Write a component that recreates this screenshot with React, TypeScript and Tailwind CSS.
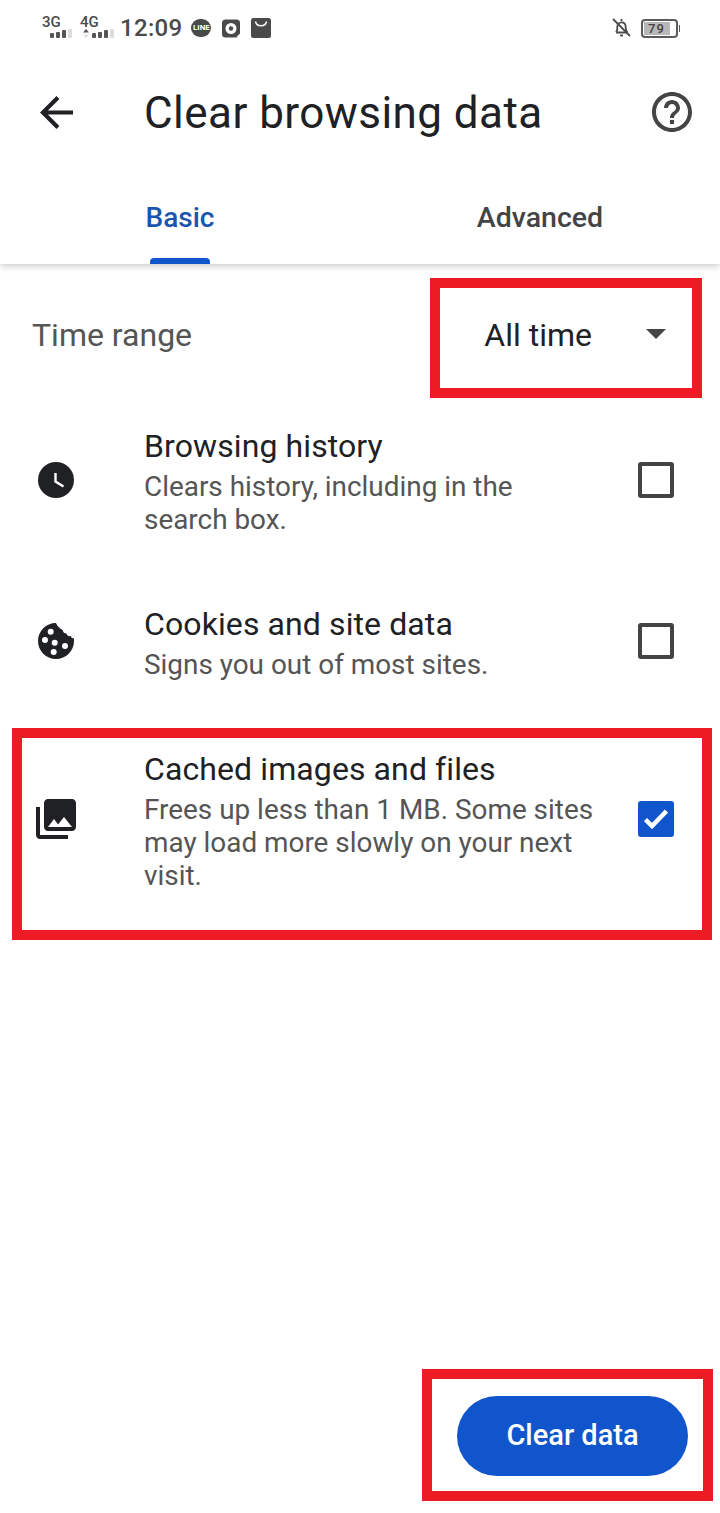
const font = "font-['Roboto',sans-serif]";

const Signal = ({ label, arrows }: { label: string; arrows?: boolean }) => (
  <div className="relative h-[24px] w-[32px]">
    <span className="absolute left-0 top-[-2px] text-[15px] font-medium leading-[16px] text-[#4a4a4a]">{label}</span>
    <div className={`absolute top-[13px] flex items-end gap-[2px] ${arrows ? "left-[3px]" : "left-[8px]"}`}>
      {arrows && (
        <svg width="6" height="9" viewBox="0 0 6 9" className="mr-[1px]">
          <path d="M3 0l3 3.500H0z" fill="#555" />
          <path d="M3 9L0 5.500h6z" fill="#ddd" />
        </svg>
      )}
      <span className="h-[5px] w-[4px] rounded-[1px] bg-[#555]" />
      <span className="h-[6px] w-[4px] rounded-[1px] bg-[#555]" />
      <span className="h-[8px] w-[4px] rounded-[1px] bg-[#555]" />
      <span className="h-[9px] w-[4px] rounded-[1px] bg-[#ddd]" />
    </div>
  </div>
);

const StatusBar = () => (
  <div className="flex h-[50px] items-center pl-[42px] pr-[40px] pt-[6px]">
    <Signal label="3G" />
    <div className="w-[6px]" />
    <Signal label="4G" arrows />
    <span className="ml-[8px] text-[24px] font-medium leading-none tracking-[0.3px] text-[#4a4a4a]">12:09</span>
    <div className="relative ml-[9px] flex h-[18px] w-[20px] items-center justify-center rounded-full bg-[#4a4a4a]">
      <span className="text-[8px] font-bold leading-none text-white">LINE</span>
    </div>
    <svg width="18" height="19" viewBox="0 0 18 19" className="ml-[11px]">
      <rect width="18" height="18" y="0.5" rx="3.5" fill="#4a4a4a" />
      <circle cx="9" cy="9.5" r="5.5" fill="#fff" />
      <circle cx="9" cy="9.5" r="2.2" fill="#4a4a4a" />
      <path d="M14 18.500l4-4v4z" fill="#fff" />
    </svg>
    <svg width="20" height="20" viewBox="0 0 20 20" className="ml-[11px]">
      <rect width="20" height="20" rx="2.5" fill="#4a4a4a" />
      <path d="M4.500 3.500c.6 3 2.600 4.300 5.500 4.300s4.900-1.300 5.500-4.300" stroke="#fff" strokeWidth="1.400" fill="none" />
    </svg>
    <div className="flex-1" />
    <svg width="19" height="20" viewBox="0 0 19 20" fill="none" stroke="#4a4a4a" strokeWidth="1.800">
      <path d="M4 14.500h11.500M4 14.500c1.500-1.500 1.300-3 1.300-5.500 0-2.800 1.700-4.700 4.200-4.700 2.500 0 4.200 1.900 4.200 4.700 0 2.500-.2 4 1.800 5.500" />
      <path d="M1 1l17 17" />
      <path d="M8 17.500h3" />
      <path d="M9.500 1v2" />
    </svg>
    <div className="ml-[10px] flex items-center">
      <div className="relative flex h-[19px] w-[37px] items-center rounded-[4px] border-2 border-[#5a5a5a] p-[1px]">
        <div className="flex h-full w-[26px] items-center justify-center bg-[#b8b8b8]">
          <span className="text-[13px] font-medium leading-none tracking-[1px] text-[#444]">79</span>
        </div>
      </div>
      <div className="ml-[1px] h-[7px] w-[1.500px] bg-[#5a5a5a]" />
    </div>
  </div>
);

const Header = () => (
  <div className="relative z-10 bg-white shadow-[0_2px_7px_rgba(0,0,0,0.22)]">
    <StatusBar />
    <div className="flex h-[124px] items-start pt-[39px]">
      <div className="flex w-[144px] justify-start pl-[40px] pt-[7px]">
        <svg width="33" height="33" viewBox="4 4 16 16" fill="#202124">
          <path d="M20 11H7.830l5.590-5.590L12 4l-8 8 8 8 1.410-1.410L7.830 13H20v-2z" />
        </svg>
      </div>
      <h1 className="flex-1 text-[44px] font-normal leading-[48px] tracking-[0.45px] text-[#202124]">Clear browsing data</h1>
      <div className="pr-[28px] pt-[3px]">
        <svg width="40" height="40" viewBox="2 2 20 20" fill="#444">
          <path d="M11 18h2v-2h-2v2zm1-16C6.480 2 2 6.480 2 12s4.480 10 10 10 10-4.480 10-10S17.520 2 12 2zm0 18c-4.410 0-8-3.590-8-8s3.590-8 8-8 8 3.590 8 8-3.590 8-8 8zm0-14c-2.210 0-4 1.790-4 4h2c0-1.100.9-2 2-2s2 .9 2 2c0 2-3 1.750-3 5h2c0-2.250 3-2.500 3-5 0-2.210-1.790-4-4-4z" />
        </svg>
      </div>
    </div>
    <div className="flex h-[90px]">
      <div className="relative flex flex-1 justify-center pt-[27px]">
        <span className="text-[28px] font-medium leading-[34px] text-[#1a56b0]">Basic</span>
        <div className="absolute bottom-0 left-[150px] h-[6px] w-[60px] rounded-t-[4px] bg-[#1155cc]" />
      </div>
      <div className="flex flex-1 justify-center pt-[27px]">
        <span className="text-[28.500px] font-medium leading-[34px] text-[#444]">Advanced</span>
      </div>
    </div>
  </div>
);

const Checkbox = ({ checked }: { checked?: boolean }) =>
  checked ? (
    <div className="flex h-[36px] w-[36px] items-center justify-center rounded-[3px] bg-[#1155cc]">
      <svg width="24" height="20" viewBox="0 0 24 20" fill="none" stroke="#fff" strokeWidth="4.500">
        <path d="M1.500 10.500l6.500 6.500L22.500 2" />
      </svg>
    </div>
  ) : (
    <div className="h-[36px] w-[36px] rounded-[3px] border-[4px] border-[#444]" />
  );

const ClockIcon = () => (
  <svg width="36" height="36" viewBox="0 0 36 36">
    <circle cx="18" cy="18" r="18" fill="#202124" />
    <path d="M17.500 11v8.500l8 5" fill="none" stroke="#fff" strokeWidth="2.400" />
  </svg>
);

const CookieIcon = () => (
  <svg width="36" height="36" viewBox="0 0 36 36" fill="#202124">
    <path d="M18 0C8 0 0 8 0 18s8 18 18 18 18-8 18-18c0-1-.1-2-.2-3-1.200.5-2.500 0-3-2-2 .5-3.800-.3-4.300-2.500-2 0-3.500-1-3.800-3.500C22.500 6 19 3 18 0z" />
    <g fill="#fff">
      <circle cx="12.700" cy="8.700" r="3" />
      <circle cx="7" cy="17" r="3" />
      <circle cx="16.700" cy="19.700" r="3" />
      <circle cx="27" cy="23" r="3" />
      <circle cx="15.700" cy="29" r="3" />
    </g>
  </svg>
);

const PhotosIcon = () => (
  <svg width="40" height="40" viewBox="2 2 20 20" fill="#202124">
    <path d="M22 16V4c0-1.100-.9-2-2-2H8c-1.100 0-2 .9-2 2v12c0 1.100.9 2 2 2h12c1.100 0 2-.9 2-2zm-11-4l2.030 2.710L16 11l4 5H8l3-4zM2 6v14c0 1.100.9 2 2 2h14v-2H4V6H2z" />
  </svg>
);

const Option = ({ icon, title, lines, checked }: { icon: React.ReactNode; title: string; lines: string[]; checked?: boolean }) => (
  <div className="flex items-center">
    <div className="mb-[3px] flex w-[144px] justify-center pr-[32px]">{icon}</div>
    <div className="flex-1">
      <div className="text-[32px] leading-[40px] tracking-[0.1px] text-[#202124]">{title}</div>
      <div className="mt-[4px] text-[27.900px] leading-[33px] text-[#555]">
        {lines.map((l) => (
          <div key={l}>{l}</div>
        ))}
      </div>
    </div>
    <div className="mb-[3px] pr-[46px]">
      <Checkbox checked={checked} />
    </div>
  </div>
);

export default function App() {
  return (
    <div className={`relative flex h-[1513px] w-[720px] flex-col overflow-hidden bg-white ${font}`}>
      <Header />

      <div className="flex h-[142px] items-center pl-[32px] pr-[54px]">
        <span className="text-[32px] text-[#555]">Time range</span>
        <span className="ml-auto text-[32px] text-[#202124]">All time</span>
        <svg width="20" height="10" viewBox="0 0 20 10" className="mb-[2px] ml-[54px]">
          <path d="M0 0h20L10 10z" fill="#444" />
        </svg>
      </div>

      <div className="flex flex-col gap-[68px] pt-[20px]">
        <Option icon={<ClockIcon />} title="Browsing history" lines={["Clears history, including in the", "search box."]} />
        <Option icon={<CookieIcon />} title="Cookies and site data" lines={["Signs you out of most sites."]} />
        <Option
          icon={<PhotosIcon />}
          title="Cached images and files"
          lines={["Frees up less than 1 MB. Some sites", "may load more slowly on your next", "visit."]}
          checked
        />
      </div>

      <div className="mt-auto flex justify-end pb-[37px] pr-[32px]">
        <button className="h-[80px] w-[231px] rounded-full bg-[#1155cc] text-[29px] font-medium text-white">Clear data</button>
      </div>

      {/* red annotation boxes drawn on top of the screenshot */}
      <div className="absolute left-[430px] top-[278px] z-20 h-[120px] w-[272px] border-[10px] border-[#ed1c24]" />
      <div className="absolute left-[12px] top-[728px] z-20 h-[212px] w-[700px] border-[10px] border-[#ed1c24]" />
      <div className="absolute left-[422px] top-[1369px] z-20 h-[132px] w-[291px] border-[10px] border-[#ed1c24]" />
    </div>
  );
}
